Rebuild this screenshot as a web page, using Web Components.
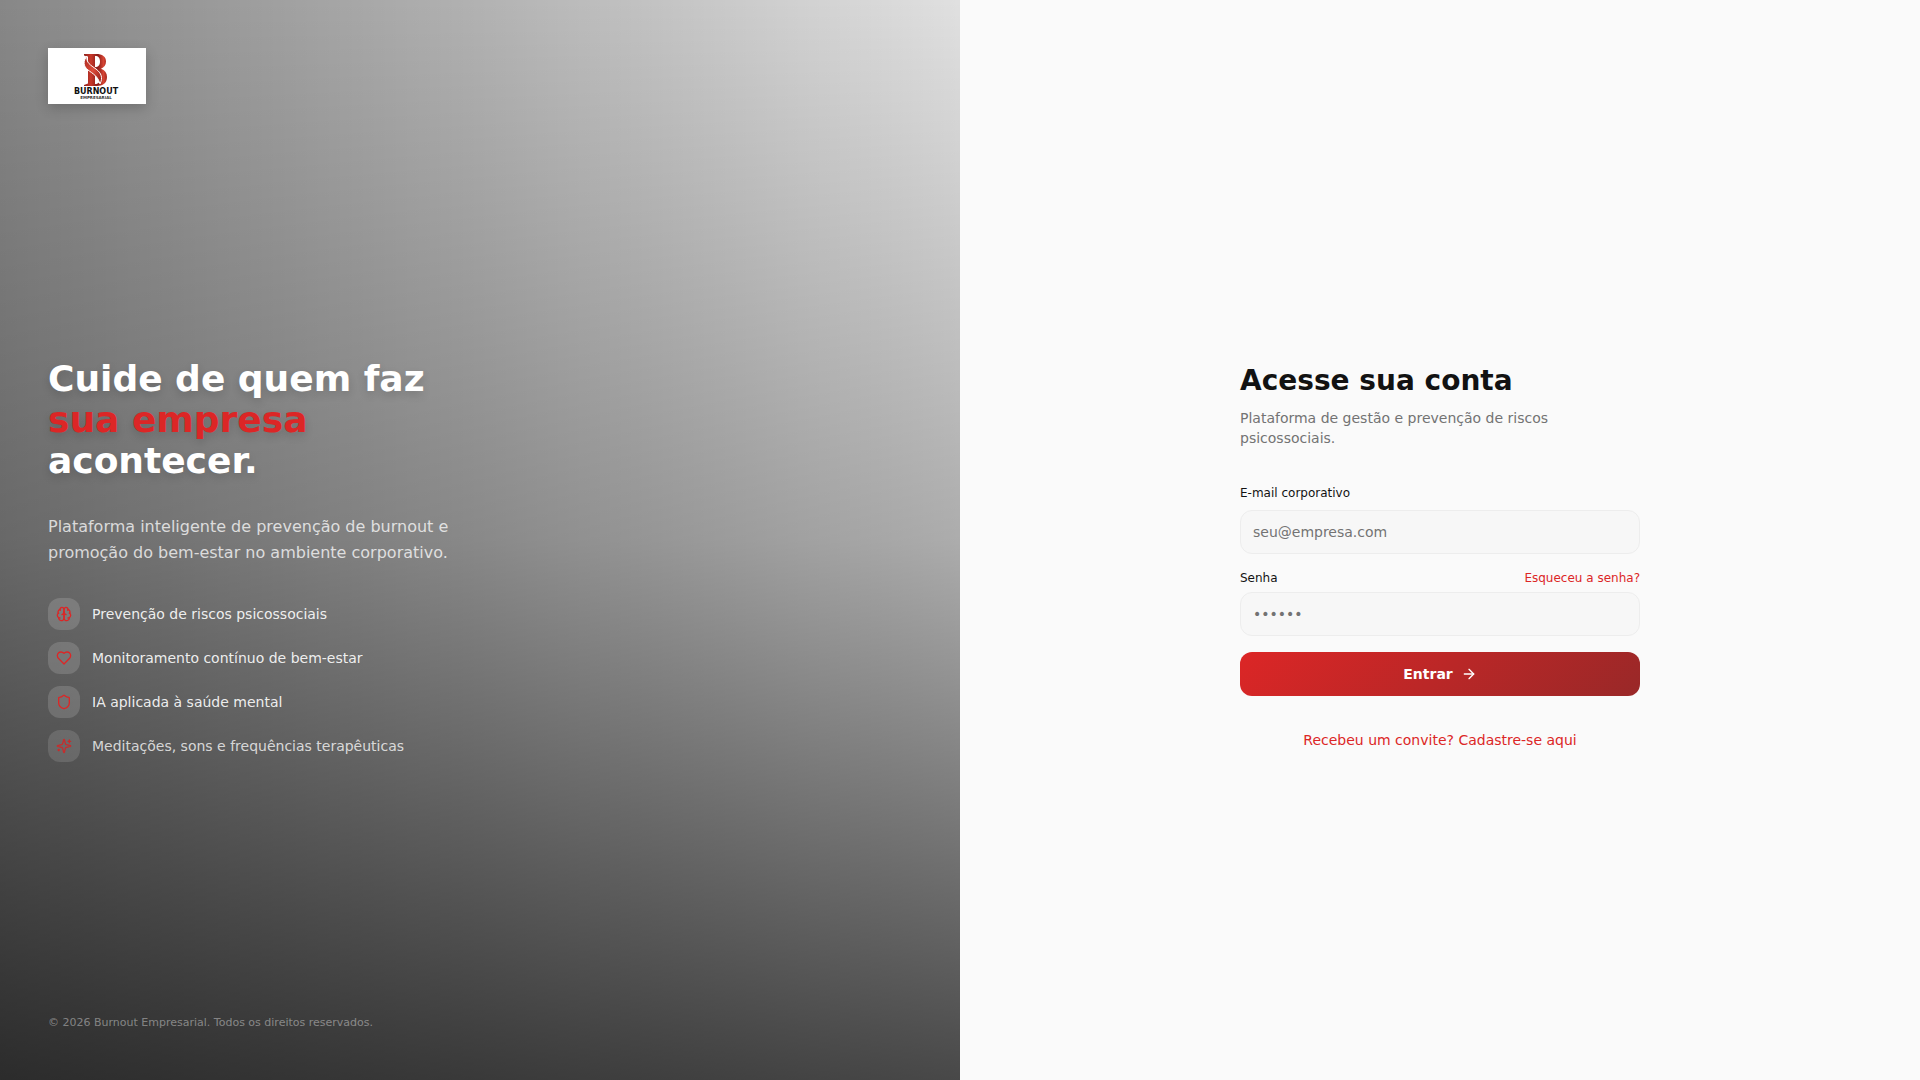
<!DOCTYPE html>
<html lang="pt-BR">
<head>
<meta charset="UTF-8">
<meta name="viewport" content="width=device-width, initial-scale=1.0">
<title>Burnout Empresarial</title>
<style>
    body {
        margin: 0;
        font-family: "DejaVu Sans", sans-serif;
        font-size: 16px;
        line-height: 24px;
        color: #121212;
        background: #fafafa;
        --brand: #dc2626;
        --brand-dark: #992828;
    }
</style>
</head>
<body>

<login-page>
    <brand-panel slot="brand">
        <brand-logo slot="logo"></brand-logo>
        <span slot="title">Cuide de quem faz <em>sua empresa</em> acontecer.</span>
        <span slot="lead">Plataforma inteligente de prevenção de burnout e promoção do bem-estar no ambiente corporativo.</span>
        <feature-item icon="brain">Prevenção de riscos psicossociais</feature-item>
        <feature-item icon="heart">Monitoramento contínuo de bem-estar</feature-item>
        <feature-item icon="shield">IA aplicada à saúde mental</feature-item>
        <feature-item icon="sparkles" class="entering">Meditações, sons e frequências terapêuticas</feature-item>
        <span slot="footer">© 2026 Burnout Empresarial. Todos os direitos reservados.</span>
    </brand-panel>
    <login-form></login-form>
</login-page>

<script>
// Ícones de traço, grade 24x24
const ICONS = {
    brain: '<path d="M12 5a3 3 0 1 0-5.997.125 4 4 0 0 0-2.526 5.77 4 4 0 0 0 .556 6.588A4 4 0 1 0 12 18Z"/><path d="M12 5a3 3 0 1 1 5.997.125 4 4 0 0 1 2.526 5.77 4 4 0 0 1-.556 6.588A4 4 0 1 1 12 18Z"/><path d="M15 13a4.5 4.5 0 0 1-3-4 4.5 4.5 0 0 1-3 4"/><path d="M17.599 6.5a3 3 0 0 0 .399-1.375"/><path d="M6.003 5.125A3 3 0 0 0 6.401 6.5"/><path d="M3.477 10.896a4 4 0 0 1 .585-.396"/><path d="M19.938 10.5a4 4 0 0 1 .585.396"/><path d="M6 18a4 4 0 0 1-1.967-.516"/><path d="M19.967 17.484A4 4 0 0 1 18 18"/>',
    heart: '<path d="M19 14c1.49-1.46 3-3.21 3-5.5A5.5 5.5 0 0 0 16.5 3c-1.76 0-3 .5-4.5 2-1.5-1.5-2.74-2-4.5-2A5.5 5.5 0 0 0 2 8.5c0 2.3 1.5 4.05 3 5.5l7 7Z"/>',
    shield: '<path d="M20 13c0 5-3.5 7.5-7.66 8.95a1 1 0 0 1-.67-.01C7.5 20.5 4 18 4 13V6a1 1 0 0 1 1-1c2 0 4.5-1.2 6.24-2.72a1.17 1.17 0 0 1 1.52 0C14.51 3.81 17 5 19 5a1 1 0 0 1 1 1z"/>',
    sparkles: '<path d="M9.937 15.5A2 2 0 0 0 8.5 14.063l-6.135-1.582a.5.5 0 0 1 0-.962L8.5 9.936A2 2 0 0 0 9.937 8.5l1.582-6.135a.5.5 0 0 1 .963 0L14.063 8.5A2 2 0 0 0 15.5 9.937l6.135 1.581a.5.5 0 0 1 0 .964L15.5 14.063a2 2 0 0 0-1.437 1.437l-1.582 6.135a.5.5 0 0 1-.963 0z"/><path d="M20 3v4"/><path d="M22 5h-4"/><path d="M4 17v2"/><path d="M5 18H3"/>',
    arrow: '<path d="M5 12h14"/><path d="m12 5 7 7-7 7"/>'
};

/**
 * Ícone de linha: <line-icon name="heart">
 */
class LineIcon extends HTMLElement {
    connectedCallback() {
        if (this.shadowRoot) return;
        this.attachShadow({ mode: 'open' });
        this.shadowRoot.innerHTML = `
            <style>
                :host { display: block; width: 16px; height: 16px; flex: none; }
                svg {
                    display: block;
                    width: 100%;
                    height: 100%;
                    fill: none;
                    stroke: currentColor;
                    stroke-width: 2;
                    stroke-linecap: round;
                    stroke-linejoin: round;
                }
            </style>
            <svg viewBox="0 0 24 24" aria-hidden="true">${ICONS[this.getAttribute('name')] || ''}</svg>
        `;
    }
}

/**
 * Página dividida em duas colunas iguais
 */
class LoginPage extends HTMLElement {
    constructor() {
        super();
        this.attachShadow({ mode: 'open' });
        this.shadowRoot.innerHTML = `
            <style>
                :host {
                    display: grid;
                    grid-template-columns: 1fr 1fr;
                    min-height: 100vh;
                }
                .content {
                    display: flex;
                    align-items: center;
                    justify-content: center;
                    padding: 34px 24px 0;
                }
                @media (max-width: 1023px) {
                    :host { grid-template-columns: 1fr; }
                    ::slotted([slot="brand"]) { display: none; }
                }
            </style>
            <slot name="brand"></slot>
            <main class="content"><slot></slot></main>
        `;
    }
}

/**
 * Painel institucional à esquerda
 */
class BrandPanel extends HTMLElement {
    constructor() {
        super();
        this.attachShadow({ mode: 'open' });
        this.shadowRoot.innerHTML = `
            <style>
                :host {
                    display: flex;
                    flex-direction: column;
                    justify-content: space-between;
                    padding: 48px;
                    color: #fff;
                    background:
                        linear-gradient(to top, rgba(0, 0, 0, .68), rgba(0, 0, 0, .23) 50%, transparent),
                        linear-gradient(to right, rgba(0, 0, 0, .47), rgba(0, 0, 0, .3) 50%, rgba(0, 0, 0, .12)),
                        #fff;
                }
                .intro {
                    max-width: 448px;
                    padding-top: 2px;
                }
                h1 {
                    margin: 0;
                    max-width: 384px;
                    font-size: 36px;
                    line-height: 41px;
                    font-weight: 700;
                    text-shadow: 0 4px 8px rgba(0, 0, 0, .15);
                }
                .lead {
                    margin: 33px 0 32px;
                    max-width: 416px;
                    line-height: 26px;
                    color: rgba(255, 255, 255, .75);
                }
                .features {
                    display: flex;
                    flex-direction: column;
                    gap: 12px;
                }
                footer {
                    font-size: 11px;
                    line-height: 18px;
                    color: rgba(255, 255, 255, .4);
                }
                ::slotted(.entering) { opacity: .85; }
            </style>
            <header><slot name="logo"></slot></header>
            <div class="intro">
                <h1><slot name="title"></slot></h1>
                <p class="lead"><slot name="lead"></slot></p>
                <div class="features"><slot></slot></div>
            </div>
            <footer><slot name="footer"></slot></footer>
        `;
    }

    connectedCallback() {
        // destaque do título
        this.querySelectorAll('em').forEach(em => {
            em.style.cssText = 'display: block; font-style: normal; color: var(--brand)';
        });
    }
}

/**
 * Logotipo em cartão branco
 */
class BrandLogo extends HTMLElement {
    constructor() {
        super();
        this.attachShadow({ mode: 'open' });
        this.shadowRoot.innerHTML = `
            <style>
                :host {
                    display: block;
                    width: 98px;
                    height: 56px;
                    background: #fff;
                    box-shadow: 0 4px 12px rgba(0, 0, 0, .2);
                }
                svg { display: block; width: 100%; height: 100%; }
            </style>
            <svg viewBox="0 0 98 56" role="img" aria-label="Burnout Empresarial">
                <defs>
                    <linearGradient id="red" x1="0" y1="0" x2="1" y2="0">
                        <stop offset="0" stop-color="#8e1f1a"/>
                        <stop offset=".3" stop-color="#c8392b"/>
                        <stop offset=".6" stop-color="#8a1c18"/>
                        <stop offset=".85" stop-color="#d64534"/>
                        <stop offset="1" stop-color="#a3271e"/>
                    </linearGradient>
                    <linearGradient id="ribbon" x1="0" y1="0" x2="1" y2="1">
                        <stop offset="0" stop-color="#a8281f"/>
                        <stop offset=".5" stop-color="#dd4c3a"/>
                        <stop offset="1" stop-color="#8a1c18"/>
                    </linearGradient>
                </defs>
                <!-- haste e curvas -->
                <path fill="url(#red)" fill-rule="evenodd" d="M36 6h12c6.500 0 10 2.500 10 7.500 0 3.500-2 6-5 7.300 4 1.400 6 4.200 6 8.200 0 6-4 9-10.500 9H36v-1l4-1.500V9l-4-1.500zM47 8v11c3.500 0 5-2 5-5.500S50.500 8 47 8zM47 23v13c4 0 5.500-2.500 5.500-6.500S51 23 47 23z"/>
                <!-- fita cruzando a letra -->
                <path fill="url(#ribbon)" stroke="#fff" stroke-width="1" d="M39 8c-4 5-4 10 1 14 4.500 3.500 10 6 12 14 3-6 1.500-11-4-15C42.500 17 38 15 39 8z"/>
                <g font-family="DejaVu Sans, sans-serif" font-weight="700" text-anchor="middle">
                    <text x="48" y="46" font-size="8" fill="#111">BURNOUT</text>
                    <text x="48" y="51" font-size="4" fill="#333">EMPRESARIAL</text>
                </g>
            </svg>
        `;
    }
}

/**
 * Item da lista de recursos
 */
class FeatureItem extends HTMLElement {
    connectedCallback() {
        if (this.shadowRoot) return;
        this.attachShadow({ mode: 'open' });
        this.shadowRoot.innerHTML = `
            <style>
                :host {
                    display: flex;
                    align-items: center;
                    gap: 12px;
                    font-size: 14px;
                    line-height: 20px;
                    color: rgba(255, 255, 255, .9);
                }
                .badge {
                    display: grid;
                    place-items: center;
                    width: 32px;
                    height: 32px;
                    border-radius: 12px;
                    color: var(--brand);
                    background: rgba(255, 255, 255, .15);
                }
            </style>
            <span class="badge"><line-icon name="${this.getAttribute('icon')}"></line-icon></span>
            <span><slot></slot></span>
        `;
    }
}

/**
 * Formulário de acesso
 */
class LoginForm extends HTMLElement {
    constructor() {
        super();
        this.attachShadow({ mode: 'open' });
        this.shadowRoot.innerHTML = `
            <style>
                :host { display: block; width: 100%; max-width: 400px; }
                h2 {
                    margin: 0 0 8px;
                    font-size: 28px;
                    line-height: 38px;
                    font-weight: 700;
                }
                .subtitle {
                    margin: 0 0 32px;
                    font-size: 14px;
                    line-height: 20px;
                    color: #737373;
                }
                form {
                    display: flex;
                    flex-direction: column;
                    gap: 16px;
                }
                label, .forgot {
                    font-size: 12px;
                    line-height: 16px;
                }
                a { color: var(--brand); text-decoration: none; }
                a:hover { text-decoration: underline; }
                .row {
                    display: flex;
                    justify-content: space-between;
                }
                input {
                    box-sizing: border-box;
                    display: block;
                    width: 100%;
                    height: 44px;
                    margin: 6px 0 0;
                    padding: 0 12px;
                    border: 1px solid #ededed;
                    border-radius: 12px;
                    background: #f7f7f7;
                    color: inherit;
                    font: inherit;
                    font-size: 14px;
                    outline: none;
                }
                input:focus { border-color: var(--brand); }
                input::placeholder { color: #737373; opacity: 1; }
                button {
                    display: flex;
                    align-items: center;
                    justify-content: center;
                    gap: 8px;
                    height: 44px;
                    padding: 0;
                    border: 0;
                    border-radius: 12px;
                    background: linear-gradient(135deg, var(--brand), var(--brand-dark));
                    color: #fff;
                    font: inherit;
                    font-size: 14px;
                    font-weight: 600;
                    cursor: pointer;
                }
                .invite {
                    margin: 32px 0 0;
                    text-align: center;
                }
                .invite a { font-size: 14px; line-height: 20px; }
            </style>
            <h2>Acesse sua conta</h2>
            <p class="subtitle">Plataforma de gestão e prevenção de riscos psicossociais.</p>
            <form>
                <div>
                    <label for="email">E-mail corporativo</label>
                    <input id="email" type="email" placeholder="seu@empresa.com" autocomplete="email">
                </div>
                <div>
                    <div class="row">
                        <label for="password">Senha</label>
                        <a class="forgot" href="#recuperar">Esqueceu a senha?</a>
                    </div>
                    <input id="password" type="password" placeholder="••••••" autocomplete="current-password">
                </div>
                <button type="submit">Entrar <line-icon name="arrow"></line-icon></button>
            </form>
            <p class="invite"><a href="#cadastro">Recebeu um convite? Cadastre-se aqui</a></p>
        `;
    }

    connectedCallback() {
        this.shadowRoot.querySelector('form').addEventListener('submit', (e) => e.preventDefault());
    }
}

// Registro dos elementos
customElements.define('line-icon', LineIcon);
customElements.define('login-page', LoginPage);
customElements.define('brand-panel', BrandPanel);
customElements.define('brand-logo', BrandLogo);
customElements.define('feature-item', FeatureItem);
customElements.define('login-form', LoginForm);
</script>
</body>
</html>
